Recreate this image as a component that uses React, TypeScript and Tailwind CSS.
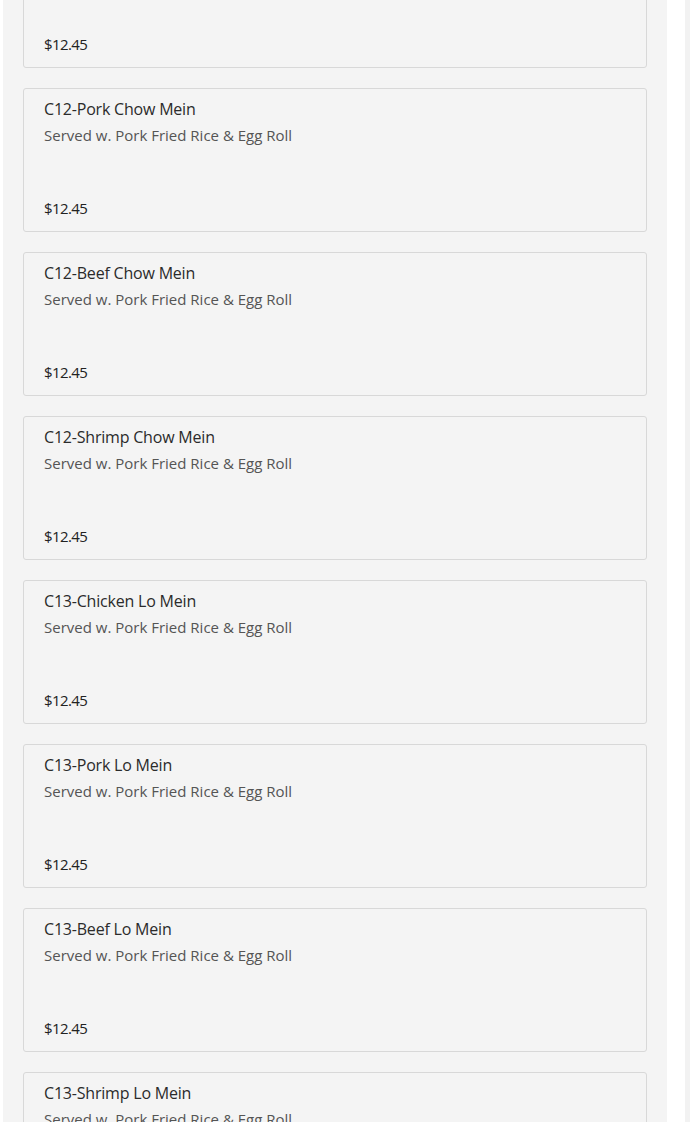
const items = [
  { name: "C12-Chicken Chow Mein", price: "$12.45" },
  { name: "C12-Pork Chow Mein", price: "$12.45" },
  { name: "C12-Beef Chow Mein", price: "$12.45" },
  { name: "C12-Shrimp Chow Mein", price: "$12.45" },
  { name: "C13-Chicken Lo Mein", price: "$12.45" },
  { name: "C13-Pork Lo Mein", price: "$12.45" },
  { name: "C13-Beef Lo Mein", price: "$12.45" },
  { name: "C13-Shrimp Lo Mein", price: "$12.45" },
];

function MenuCard({ name, price }: { name: string; price: string }) {
  return (
    <div className="flex h-[144px] flex-col rounded-[3px] border border-[#d8d8d8] bg-[#f4f4f4] px-5 pt-[11px] pb-[14px]">
      <h3 className="text-[16px] leading-[18px] font-medium tracking-[-0.2px] text-[#2b2b2b] [font-family:'Open_Sans',sans-serif]">
        {name}
      </h3>
      <p className="mt-[8px] text-[15px] leading-[18px] text-[#555] [font-family:'Open_Sans',sans-serif]">
        Served w. Pork Fried Rice &amp; Egg Roll
      </p>
      <div className="mt-auto text-[15px] leading-[18px] font-medium tracking-[-0.6px] text-[#222] [font-family:'Open_Sans',sans-serif]">
        {price}
      </div>
    </div>
  );
}

export default function App() {
  return (
    <div className="flex h-[1122px] overflow-hidden bg-white">
      <div className="ml-[3px] w-[664px] bg-[#f4f4f4] px-5">
        <div className="-mt-[76px] flex flex-col gap-5">
          {items.map((item) => (
            <MenuCard key={item.name} name={item.name} price={item.price} />
          ))}
        </div>
      </div>
      <div className="flex-grow" />
      <div className="w-[5px] bg-[#f2f2f2]" />
    </div>
  );
}
